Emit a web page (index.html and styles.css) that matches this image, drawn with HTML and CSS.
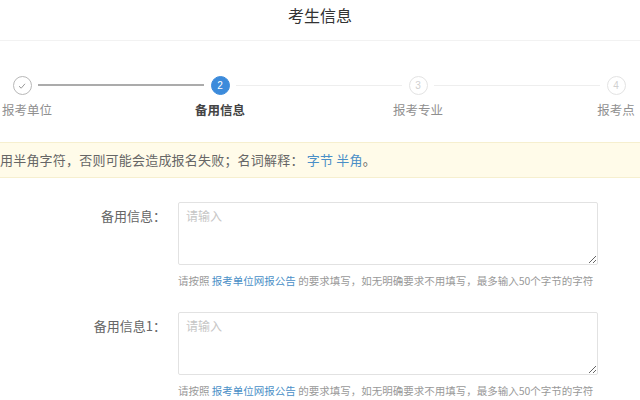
FILE: index.html
```html
<!DOCTYPE html>
<html lang="zh">
<head>
<meta charset="utf-8">
<link rel="stylesheet" href="styles.css">
</head>
<body>
<header class="header">考生信息</header>
<div class="steps">
  <div class="step done">
    <span class="dot"><svg width="10" height="10" viewBox="0 0 10 10"><path d="M2 5.2 L4.2 7.2 L8 2.8" fill="none" stroke="#9a9a9a" stroke-width="1"/></svg></span>
    <span class="label first">报考单位</span>
  </div>
  <div class="step active">
    <span class="dot">2</span>
    <span class="label">备用信息</span>
  </div>
  <div class="step">
    <span class="dot">3</span>
    <span class="label">报考专业</span>
  </div>
  <div class="step last">
    <span class="dot">4</span>
    <span class="label">报考点</span>
  </div>
</div>
<div class="notice"><span class="notice-text">用半角字符，否则可能会造成报名失败；名词解释： <a class="link">字节</a> <a class="link">半角</a>。</span></div>
<form class="form">
  <div class="row">
    <label class="row-label">备用信息：</label>
    <div class="field">
      <textarea class="input" placeholder="请输入"></textarea>
      <p class="help">请按照 <a class="link">报考单位网报公告</a> 的要求填写，如无明确要求不用填写，最多输入50个字节的字符</p>
    </div>
  </div>
  <div class="row">
    <label class="row-label">备用信息1：</label>
    <div class="field">
      <textarea class="input" placeholder="请输入"></textarea>
      <p class="help">请按照 <a class="link">报考单位网报公告</a> 的要求填写，如无明确要求不用填写，最多输入50个字节的字符</p>
    </div>
  </div>
</form>
</body>
</html>
```
FILE: styles.css
```css
* { box-sizing: border-box; }
html, body { margin: 0; padding: 0; background: #fff; overflow: hidden; }
body {
  width: 640px;
  height: 400px;
  font-family: "Noto Sans CJK SC", "Noto Sans", sans-serif;
  color: #666;
}
.header {
  height: 41px;
  border-bottom: 1px solid #f2f2f2;
  text-align: center;
  font-size: 16px;
  line-height: 30px;
  color: #333;
}
.steps {
  display: grid;
  grid-template-columns: repeat(4, 198px);
  width: 792px;
  margin-left: -77px;
  padding-top: 35px;
  height: 101px;
}
.step {
  position: relative;
  display: flex;
  flex-direction: column;
  align-items: center;
}
.step::after {
  content: "";
  position: absolute;
  top: 9px;
  left: calc(50% + 16px);
  width: 166px;
  height: 1px;
  background: #eeeeee;
}
.step.done::after { background: #ababab; height: 2px; top: 8px; }
.step.last::after { display: none; }
.dot {
  width: 19px;
  height: 19px;
  border-radius: 50%;
  border: 1px solid #e3e3e3;
  color: #d0d0d0;
  font-size: 10px;
  line-height: 17px;
  text-align: center;
  font-family: "Liberation Sans", sans-serif;
  display: flex;
  align-items: center;
  justify-content: center;
}
.step.done .dot { border-color: #b8b8b8; }
.step.active .dot { background: #3c8bdb; border-color: #3c8bdb; color: #fff; }
.label {
  margin-top: 5px;
  font-size: 12.5px;
  line-height: 20px;
  color: #8f8f8f;
}
.label.first { margin-left: 10px; }
.step.active .label { color: #444; font-weight: bold; }
.notice {
  height: 36px;
  background: #fffbe9;
  border-top: 1px solid #f6efcf;
  border-bottom: 1px solid #f6efcf;
  font-size: 13px;
  line-height: 34px;
  color: #666;
  white-space: nowrap;
}
.notice-text { letter-spacing: 0.2px; }
.link { color: #4a8fc7; text-decoration: none; }
.form { padding-top: 24px; }
.row { display: flex; }
.row-label {
  width: 178px;
  padding-right: 12px;
  padding-top: 4px;
  text-align: right;
  font-size: 13px;
  line-height: 20px;
  color: #666;
}
.field { width: 420px; }
.input {
  display: block;
  width: 420px;
  height: 63px;
  border: 1px solid #e2e2e2;
  border-radius: 2px;
  padding: 4px 7px;
  font-family: inherit;
  font-size: 12px;
  line-height: 18px;
  resize: vertical;
}
.input::placeholder { color: #c6c6c6; }
.help {
  margin: 7px 0 23px;
  font-size: 10.5px;
  line-height: 17px;
  color: #999;
  white-space: nowrap;
}
```
